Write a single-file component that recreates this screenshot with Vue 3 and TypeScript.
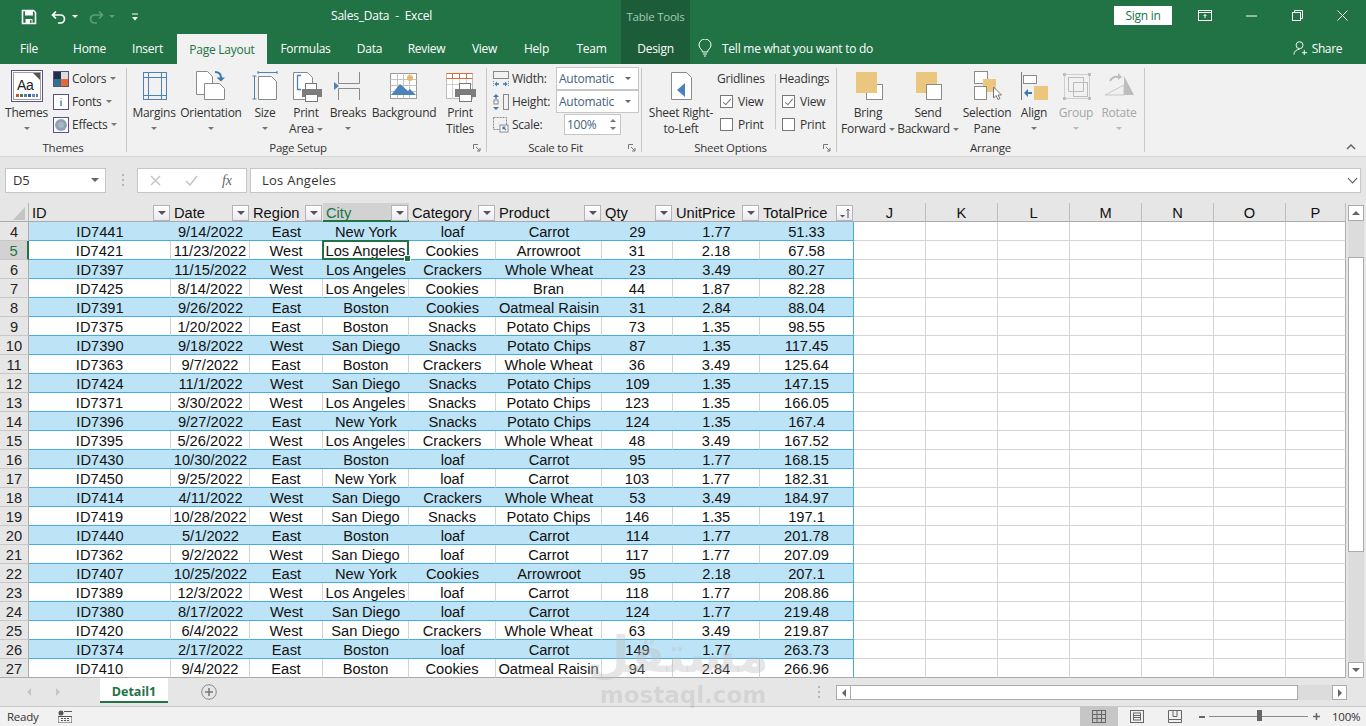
<script setup lang="ts">
const tabs: string[] = ['File', 'Home', 'Insert', 'Page Layout', 'Formulas', 'Data', 'Review', 'View', 'Help', 'Team', 'Design']

const headers: string[] = ['ID', 'Date', 'Region', 'City', 'Category', 'Product', 'Qty', 'UnitPrice', 'TotalPrice']
const blanks: string[] = ['J', 'K', 'L', 'M', 'N', 'O', 'P']

const raw = `ID7441,9/14/2022,East,New York,loaf,Carrot,29,1.77,51.33
ID7421,11/23/2022,West,Los Angeles,Cookies,Arrowroot,31,2.18,67.58
ID7397,11/15/2022,West,Los Angeles,Crackers,Whole Wheat,23,3.49,80.27
ID7425,8/14/2022,West,Los Angeles,Cookies,Bran,44,1.87,82.28
ID7391,9/26/2022,East,Boston,Cookies,Oatmeal Raisin,31,2.84,88.04
ID7375,1/20/2022,East,Boston,Snacks,Potato Chips,73,1.35,98.55
ID7390,9/18/2022,West,San Diego,Snacks,Potato Chips,87,1.35,117.45
ID7363,9/7/2022,East,Boston,Crackers,Whole Wheat,36,3.49,125.64
ID7424,11/1/2022,West,San Diego,Snacks,Potato Chips,109,1.35,147.15
ID7371,3/30/2022,West,Los Angeles,Snacks,Potato Chips,123,1.35,166.05
ID7396,9/27/2022,East,New York,Snacks,Potato Chips,124,1.35,167.4
ID7395,5/26/2022,West,Los Angeles,Crackers,Whole Wheat,48,3.49,167.52
ID7430,10/30/2022,East,Boston,loaf,Carrot,95,1.77,168.15
ID7450,9/25/2022,East,New York,loaf,Carrot,103,1.77,182.31
ID7414,4/11/2022,West,San Diego,Crackers,Whole Wheat,53,3.49,184.97
ID7419,10/28/2022,West,San Diego,Snacks,Potato Chips,146,1.35,197.1
ID7440,5/1/2022,East,Boston,loaf,Carrot,114,1.77,201.78
ID7362,9/2/2022,West,San Diego,loaf,Carrot,117,1.77,207.09
ID7407,10/25/2022,East,New York,Cookies,Arrowroot,95,2.18,207.1
ID7389,12/3/2022,West,Los Angeles,loaf,Carrot,118,1.77,208.86
ID7380,8/17/2022,West,San Diego,loaf,Carrot,124,1.77,219.48
ID7420,6/4/2022,West,San Diego,Crackers,Whole Wheat,63,3.49,219.87
ID7374,2/17/2022,East,Boston,loaf,Carrot,149,1.77,263.73
ID7410,9/4/2022,East,Boston,Cookies,Oatmeal Raisin,94,2.84,266.96`

const rows: { num: number; cells: string[] }[] = raw.split('\n').map((line, i) => ({
  num: i + 4,
  cells: line.split(','),
}))
</script>

<template>
  <div class="app">
    <header class="titlebar">
      <div class="qat">
        <svg class="q-save" width="16" height="16" viewBox="0 0 16 16"><path d="M1.500 1.500h11l2 2v11h-13z" fill="none" stroke="#fff" stroke-width="1.600"/><rect x="4" y="1.500" width="8" height="5" fill="#fff"/><rect x="4.500" y="10" width="7" height="4.500" fill="#fff"/><rect x="9" y="11" width="1.500" height="3" fill="#217346"/></svg>
        <svg class="q-undo" width="16" height="14" viewBox="0 0 16 14"><path d="M5 1.500 1.500 5 5 8.500M2 5h7.500a4 4 0 0 1 0 8H7" fill="none" stroke="#fff" stroke-width="1.700"/></svg>
        <i class="q-caret"></i>
        <svg class="q-redo" width="16" height="14" viewBox="0 0 16 14"><path d="M11 1.500 14.500 5 11 8.500M14 5H6.500a4 4 0 0 0 0 8H9" fill="none" stroke="#5f9d7c" stroke-width="1.700"/></svg>
        <i class="q-caret dim"></i>
        <svg class="q-more" width="8" height="8" viewBox="0 0 8 8"><path d="M1 1h6" stroke="#fff"/><path d="M1 4h6L4 7.500z" fill="#fff"/></svg>
      </div>
      <div class="doc-title">Sales_Data &nbsp;-&nbsp; Excel</div>
      <div class="tools-title">Table Tools</div>
      <div class="win">
        <button class="signin">Sign in</button>
        <svg class="w-ribbon" width="14" height="11" viewBox="0 0 14 11"><rect x=".5" y=".5" width="13" height="10" fill="none" stroke="#fff"/><path d="M1 2.500h12" stroke="#fff"/><path d="M7 8V4.500M5.500 6 7 4.500 8.500 6" fill="none" stroke="#fff"/></svg>
        <svg class="w-min" width="11" height="2" viewBox="0 0 11 2"><path d="M0 1h11" stroke="#fff"/></svg>
        <svg class="w-rest" width="11" height="11" viewBox="0 0 11 11"><path d="M2.500 2.500v-2h8v8h-2" fill="none" stroke="#fff"/><rect x=".5" y="2.500" width="8" height="8" fill="none" stroke="#fff"/></svg>
        <svg class="w-close" width="11" height="11" viewBox="0 0 11 11"><path d="m.5.500 10 10m0-10-10 10" stroke="#fff"/></svg>
      </div>
    </header>

    <nav class="tabsrow">
      <div class="tabs">
        <span v-for="t in tabs" :key="t" class="tab" :class="{ on: t === 'Page Layout', design: t === 'Design' }">{{ t }}</span>
      </div>
      <div class="tellme">
        <svg width="14" height="18" viewBox="0 0 14 18"><path d="M4.500 13c0-2.500-3.500-3.500-3.500-7a6 6 0 0 1 12 0c0 3.500-3.500 4.500-3.500 7zM5 15h4M6 17h2" fill="none" stroke="#fff" stroke-width="1"/></svg>
        <span>Tell me what you want to do</span>
      </div>
      <div class="share">
        <svg width="15" height="16" viewBox="0 0 16 16"><circle cx="7" cy="5" r="3.700" fill="none" stroke="#fff"/><path d="M1 15c0-3.500 2.500-5.500 6-5.500" fill="none" stroke="#fff"/><path d="M12 10v5.500M9.500 13H15" stroke="#fff"/></svg>
        <span>Share</span>
      </div>
    </nav>

    <section class="ribbon">
      <!-- Themes -->
      <div class="group g-themes">
        <div class="g-body">
          <div class="big b-themes">
            <svg class="ic" width="32" height="32" viewBox="0 0 32 32">
              <rect x=".5" y=".5" width="31" height="31" fill="#fff" stroke="#5c4f86"/>
              <rect x="2.500" y="2.500" width="27" height="27" fill="#fff" stroke="#a0a0a0"/>
              <path d="M22 3h7v7z" fill="#555"/>
              <text x="6" y="20" font-size="14" fill="#222" font-family="Liberation Sans">Aa</text>
              <rect x="5" y="24" width="3" height="3" fill="#c55a28"/><rect x="9" y="24" width="3" height="3" fill="#3e7d56"/><rect x="13" y="24" width="3" height="3" fill="#4a7fb5"/><rect x="17" y="24" width="3" height="3" fill="#2f5f8f"/><rect x="21" y="24" width="3" height="3" fill="#5c8fc4"/><rect x="25" y="24" width="2" height="3" fill="#777"/>
            </svg>
            <span>Themes</span>
            <i class="caret"></i>
          </div>
          <div class="stack small-themes">
            <div class="srow">
              <svg width="16" height="16" viewBox="0 0 16 16"><rect x=".5" y=".5" width="15" height="15" fill="#ddd" stroke="#5c4f86"/><rect x="1" y="1" width="7" height="7" fill="#23304a"/><rect x="1" y="8" width="7" height="7" fill="#2f6f8f"/><rect x="8" y="8" width="7" height="7" fill="#e2693a"/></svg>
              <span>Colors</span><i class="caret"></i>
            </div>
            <div class="srow">
              <svg width="16" height="16" viewBox="0 0 16 16"><rect x=".5" y=".5" width="15" height="15" fill="#fff" stroke="#5c4f86"/><path d="M8 4v1" stroke="#d99a2b" stroke-width="1.400"/><path d="M8 6.500V12" stroke="#3b7fbf" stroke-width="1.400"/></svg>
              <span>Fonts</span><i class="caret"></i>
            </div>
            <div class="srow">
              <svg width="16" height="16" viewBox="0 0 16 16"><rect x=".5" y=".5" width="15" height="15" fill="#fff" stroke="#5c4f86"/><circle cx="8" cy="8" r="6" fill="#8ea4b5"/><circle cx="8" cy="8" r="3" fill="#a8b6c2"/></svg>
              <span>Effects</span><i class="caret"></i>
            </div>
          </div>
        </div>
        <div class="g-label">Themes</div>
      </div>
      <i class="sep"></i>

      <!-- Page Setup -->
      <div class="group g-page">
        <div class="g-body cols-page">
          <div class="big">
            <svg class="ic" width="32" height="32" viewBox="0 0 32 32" fill="none" stroke="#4d82b8"><rect x="5.500" y="2.500" width="23" height="27"/><path d="M10.500 2.500v27M23.500 2.500v27M5.500 7.500h23M5.500 25.500h23"/></svg>
            <span>Margins</span><i class="caret"></i>
          </div>
          <div class="big">
            <svg class="ic" width="32" height="32" viewBox="0 0 32 32" fill="none"><path d="M1.500 1.500h11l5 5v18h-16z" fill="#fff" stroke="#8a8a8a"/><path d="M9.500 13.500h15l5 5v11h-20z" fill="#fff" stroke="#8a8a8a"/><path d="M20 2c4 0 6 2 6 6" stroke="#3f78b0" stroke-width="2"/><path d="m21.500 7.500 4.500 4 4-4z" fill="#3f78b0"/></svg>
            <span>Orientation</span><i class="caret"></i>
          </div>
          <div class="big">
            <svg class="ic" width="32" height="32" viewBox="0 0 32 32" fill="none"><path d="M9 2.500h19M9 1v3M28 1v3M5.500 6v23M3.500 6h4M3.500 29h4" stroke="#4d82b8"/><path d="M9.500 6.500h13l5 5v18h-18z" fill="#fff" stroke="#8a8a8a"/></svg>
            <span>Size</span><i class="caret"></i>
          </div>
          <div class="big">
            <svg class="ic" width="32" height="32" viewBox="0 0 32 32" fill="none"><path d="M3.500 2.500h14l5 5v22h-19z" fill="#fff" stroke="#8a8a8a"/><path d="M11 5.500H7.500v14H11" stroke="#4d82b8" stroke-width="1.300"/><rect x="15.500" y="13.500" width="11" height="6" fill="#fff" stroke="#777"/><rect x="12" y="19" width="21" height="8" fill="#7d7d7d"/><rect x="15.500" y="24.500" width="12" height="7" fill="#fff" stroke="#777"/></svg>
            <span>Print</span>
            <span class="withcaret">Area<i class="caret"></i></span>
          </div>
          <div class="big">
            <svg class="ic" width="32" height="32" viewBox="0 0 32 32" fill="none"><path d="M6.500 2v11.500h21V2M6.500 30V18.500h21V30" stroke="#8a8a8a"/><path d="M2 12v8l5-4z" fill="#4d82b8"/></svg>
            <span>Breaks</span><i class="caret"></i>
          </div>
          <div class="big">
            <svg class="ic" width="32" height="32" viewBox="0 0 32 32" fill="none"><rect x="2.500" y="3.500" width="26" height="25" fill="#fff" stroke="#9a9a9a"/><path d="M2.500 9.500h26M2.500 15.500h26M2.500 21.500h26M9.500 3.500v25M15.500 3.500v25M21.500 3.500v25" stroke="#c4c4c4"/><circle cx="22" cy="8" r="3" fill="#e6b96a"/><path d="m3 25 9-11 8 7 2-2 6 6z" fill="#4d82b8"/></svg>
            <span>Background</span>
          </div>
          <div class="big">
            <svg class="ic" width="32" height="32" viewBox="0 0 32 32" fill="none"><rect x="2.500" y="3.500" width="26" height="25" fill="#fff" stroke="#bdbdbd"/><path d="M2.500 8.500h26M2.500 14.500h26M8.500 3.500v25M15.500 3.500v25M22.500 3.500v25" stroke="#d0d0d0"/><path d="M2.500 3.500h26M2.500 8.500h26M8.500 3.500v5M15.500 3.500v5M22.500 3.500v5" stroke="#d96f3c"/><rect x="15.500" y="13.500" width="11" height="6" fill="#fff" stroke="#777"/><rect x="11" y="19" width="22" height="8" fill="#7d7d7d"/><rect x="15.500" y="24.500" width="12" height="7" fill="#fff" stroke="#777"/></svg>
            <span>Print</span><span>Titles</span>
          </div>
        </div>
        <div class="g-label shifted">Page Setup<svg class="launch" width="8" height="8" viewBox="0 0 8 8" fill="none" stroke="#777"><path d="M.5 5V.5H5M3 3l4 4M7 4v3H4"/></svg></div>
      </div>
      <i class="sep"></i>

      <!-- Scale to Fit -->
      <div class="group g-scale">
        <div class="g-body stack">
          <div class="srow scale-row">
            <svg width="16" height="16" viewBox="0 0 16 16" fill="none"><rect x=".5" y=".5" width="15" height="7" stroke="#888"/><path d="M.5 10v5M15.500 10v5" stroke="#888" stroke-dasharray="1 1"/><path d="M3 13h3M10 13h3" stroke="#3f78b0" stroke-width="1.400"/><path d="m1.500 13 2.500-2.500v5zM14.500 13 12 10.500v5z" fill="#3f78b0"/></svg>
            <span class="slabel">Width:</span>
            <div class="combo"><span>Automatic</span><i class="caret dark"></i></div>
          </div>
          <div class="srow scale-row">
            <svg width="16" height="16" viewBox="0 0 16 16" fill="none"><rect x="10.500" y=".5" width="5" height="15" stroke="#888"/><path d="M3 1v14" stroke="#3f78b0" stroke-width="1.400" stroke-dasharray="4 8"/><path d="m0 3 3-3 3 3zM0 13l3 3 3-3z" fill="#3f78b0"/><rect x="1" y="6" width="4" height="4" stroke="#888"/></svg>
            <span class="slabel">Height:</span>
            <div class="combo"><span>Automatic</span><i class="caret dark"></i></div>
          </div>
          <div class="srow scale-row">
            <svg width="16" height="16" viewBox="0 0 16 16" fill="none"><rect x=".5" y=".5" width="13" height="12" stroke="#888" stroke-dasharray="2 1"/><rect x="7" y="8" width="8" height="7" fill="#fff" stroke="#888"/><path d="m10 10 3 3M10 12.500V10h2.500" stroke="#3f78b0" stroke-width="1.200"/></svg>
            <span class="slabel">Scale:</span>
            <div class="spin"><span>100%</span>
              <div class="spin-arrows"><i class="up"></i><i class="down"></i></div>
            </div>
          </div>
        </div>
        <div class="g-label shifted">Scale to Fit<svg class="launch" width="8" height="8" viewBox="0 0 8 8" fill="none" stroke="#777"><path d="M.5 5V.5H5M3 3l4 4M7 4v3H4"/></svg></div>
      </div>
      <i class="sep"></i>

      <!-- Sheet Options -->
      <div class="group g-sheet">
        <div class="g-body cols-sheet">
          <div class="big rtl">
            <svg class="ic" width="32" height="32" viewBox="0 0 32 32" fill="none"><path d="M6.500 2.500h15l5 5v22h-20z" fill="#fff" stroke="#8a8a8a"/><path d="M20 13v14l-8-7z" fill="#4d82b8"/></svg>
            <span>Sheet Right-</span><span>to-Left</span>
          </div>
          <div class="stack opts opts-grid">
            <div class="srow head">Gridlines</div>
            <div class="srow"><i class="check on"></i><span>View</span></div>
            <div class="srow"><i class="check"></i><span>Print</span></div>
          </div>
          <i class="opt-sep"></i>
          <div class="stack opts opts-head">
            <div class="srow head">Headings</div>
            <div class="srow"><i class="check on"></i><span>View</span></div>
            <div class="srow"><i class="check"></i><span>Print</span></div>
          </div>
        </div>
        <div class="g-label shifted">Sheet Options<svg class="launch" width="8" height="8" viewBox="0 0 8 8" fill="none" stroke="#777"><path d="M.5 5V.5H5M3 3l4 4M7 4v3H4"/></svg></div>
      </div>
      <i class="sep"></i>

      <!-- Arrange -->
      <div class="group g-arrange">
        <div class="g-body cols-arrange">
          <div class="big">
            <svg class="ic" width="32" height="32" viewBox="0 0 32 32"><rect x="14.500" y="14.500" width="16" height="15" fill="#fff" stroke="#8a8a8a"/><rect x="4" y="2" width="21" height="21" fill="#ebc67e"/></svg>
            <span>Bring</span><span class="withcaret">Forward<i class="caret"></i></span>
          </div>
          <div class="big">
            <svg class="ic" width="32" height="32" viewBox="0 0 32 32"><rect x="4" y="2" width="21" height="21" fill="#ebc67e"/><rect x="14.500" y="14.500" width="15" height="15" fill="#fff" stroke="#8a8a8a"/></svg>
            <span>Send</span><span class="withcaret">Backward<i class="caret"></i></span>
          </div>
          <div class="big">
            <svg class="ic" width="32" height="32" viewBox="0 0 32 32"><rect x="3.500" y="1.500" width="13" height="12" fill="#fff" stroke="#8a8a8a"/><rect x="12" y="9" width="13" height="13" fill="#ebc67e"/><rect x="3.500" y="16.500" width="12" height="13" fill="#fff" stroke="#8a8a8a"/><path d="M22.500 17v11l2.500-2.500 2 4 2-1-2-3.500h3.500z" fill="#fff" stroke="#777"/></svg>
            <span>Selection</span><span>Pane</span>
          </div>
          <div class="big">
            <svg class="ic" width="32" height="32" viewBox="0 0 32 32"><path d="M3.500 2v28" stroke="#777" fill="none"/><rect x="5.500" y="5.500" width="13" height="8" fill="#fff" stroke="#8a8a8a"/><rect x="16" y="16" width="14" height="14" fill="#ebc67e"/><path d="M8 23h6" stroke="#3f78b0" stroke-width="2"/><path d="m6 23 4-4v8z" fill="#3f78b0"/></svg>
            <span>Align</span><i class="caret"></i>
          </div>
          <div class="big off">
            <svg class="ic" width="32" height="32" viewBox="0 0 32 32" fill="none" stroke="#cfcfcf"><rect x="4.500" y="4.500" width="25" height="24"/><rect x="8.500" y="7.500" width="15" height="14" stroke="#bdbdbd"/><rect x="13.500" y="12.500" width="14" height="14" stroke="#bdbdbd"/><rect x="3" y="3" width="3" height="3" fill="#bdbdbd" stroke="none"/><rect x="28" y="3" width="3" height="3" fill="#bdbdbd" stroke="none"/><rect x="3" y="27" width="3" height="3" fill="#bdbdbd" stroke="none"/><rect x="28" y="27" width="3" height="3" fill="#bdbdbd" stroke="none"/></svg>
            <span>Group</span><i class="caret"></i>
          </div>
          <div class="big off">
            <svg class="ic" width="32" height="32" viewBox="0 0 32 32" fill="none"><path d="M2 25h19V15z" fill="#f0f0f0" stroke="#c8c8c8"/><path d="M21 6 31 25H21z" fill="#bdbdbd"/><path d="M7 11c2-4 5-5 9-4" stroke="#bdbdbd" stroke-width="2"/><path d="m15 3 4 4-4 3z" fill="#bdbdbd"/></svg>
            <span>Rotate</span><i class="caret"></i>
          </div>
        </div>
        <div class="g-label">Arrange</div>
      </div>
      <i class="sep"></i>
      <svg class="collapse" width="10" height="6" viewBox="0 0 10 6"><path d="m1 5 4-4 4 4" fill="none" stroke="#666" stroke-width="1.500"/></svg>
    </section>

    <section class="fbar">
      <div class="namebox"><span>D5</span><i class="caret dark big-c"></i></div>
      <svg class="grip" width="3" height="13" viewBox="0 0 3 13"><path d="M1 0h2v2H1zM1 5h2v2H1zM1 10h2v2H1z" fill="#b4b4b4"/></svg>
      <div class="fbtns">
        <svg width="11" height="11" viewBox="0 0 11 11"><path d="m1 1 9 9m0-9-9 9" stroke="#c4c4c4" stroke-width="1.500"/></svg>
        <svg width="13" height="11" viewBox="0 0 13 11"><path d="m1 6 4 4 7-9" fill="none" stroke="#c4c4c4" stroke-width="1.500"/></svg>
        <span class="fx">fx</span>
      </div>
      <div class="finput"><span>Los Angeles</span><i class="fcaret"></i></div>
    </section>

    <section class="sheetwrap">
      <div class="sheet">
        <div class="row hrow">
          <div class="corner"><i></i></div>
          <div v-for="h in headers" :key="h" class="hcell" :class="{ cur: h === 'City' }">
            <span>{{ h }}</span>
            <b class="filter" :class="{ sorted: h === 'TotalPrice' }">
              <svg v-if="h === 'TotalPrice'" width="12" height="12" viewBox="0 0 12 12"><path d="M1 8h5L3.500 10.500z" fill="#555"/><path d="M9 2v9M7.500 3.500 9 2l1.500 1.500" fill="none" stroke="#555"/></svg>
              <i v-else></i>
            </b>
          </div>
          <div v-for="b in blanks" :key="b" class="hblank">{{ b }}</div>
        </div>
        <div v-for="r in rows" :key="r.num" class="row" :class="r.num % 2 === 0 ? 'band' : 'plain'">
          <div class="rnum" :class="{ cur: r.num === 5 }">{{ r.num }}</div>
          <div v-for="(c, i) in r.cells" :key="i" class="cell" :class="{ last: i === 8 }">
            {{ c }}
            <template v-if="r.num === 5 && i === 3"><span class="selbox"><i class="handle"></i></span></template>
          </div>
          <div v-for="b in blanks" :key="b" class="empty"></div>
        </div>
      </div>
      <aside class="vscroll">
        <button class="vbtn"><i class="tri-up"></i></button>
        <div class="vtrack"><div class="vthumb"></div></div>
        <button class="vbtn"><i class="tri-down"></i></button>
      </aside>
    </section>

    <section class="sheettabs">
      <div class="navs">
        <i class="nav-l"></i><i class="nav-r"></i>
      </div>
      <div class="sheet-tab">Detail1</div>
      <svg class="plus" width="16" height="16" viewBox="0 0 16 16"><circle cx="8" cy="8" r="7.300" fill="none" stroke="#8a8a8a"/><path d="M8 4v8M4 8h8" stroke="#777" stroke-width="1.500"/></svg>
      <svg class="grip2" width="3" height="13" viewBox="0 0 3 13"><path d="M0 0h2v2H0zM0 5h2v2H0zM0 10h2v2H0z" fill="#b4b4b4"/></svg>
      <div class="hscroll">
        <button class="hbtn"><i class="tri-left"></i></button>
        <div class="htrack"><div class="hthumb"></div></div>
        <button class="hbtn"><i class="tri-right"></i></button>
      </div>
    </section>

    <footer class="status">
      <span class="ready">Ready</span>
      <svg class="macro" width="14" height="13" viewBox="0 0 14 13"><circle cx="3" cy="3" r="2.500" fill="#555"/><path d="M6 1.500h8M0 6.500h14V13H0z" fill="none" stroke="#555"/><path d="M3 8.500h2M6 8.500h2M9 8.500h2M3 10.500h2M6 10.500h2M9 10.500h2" stroke="#555"/></svg>
      <div class="views">
        <div class="vw on"><svg width="14" height="13" viewBox="0 0 14 13" fill="none" stroke="#666"><rect x=".5" y=".5" width="13" height="12"/><path d="M.5 4.500h13M.5 8.500h13M5 .5v12M9.500.500v12"/></svg></div>
        <div class="vw"><svg width="14" height="13" viewBox="0 0 14 13" fill="none" stroke="#666"><rect x=".5" y=".5" width="13" height="12"/><rect x="3.500" y="3" width="7" height="7"/><path d="M3.500 5.500h7M3.500 7.500h7"/></svg></div>
        <div class="vw"><svg width="14" height="13" viewBox="0 0 14 13" fill="none" stroke="#666"><path d="M.5 9.500v-9h13v9zM.5 9.500v3h13v-3M5 .5v6h4v-6"/></svg></div>
      </div>
      <div class="zoom">
        <i class="zminus"></i>
        <div class="zline"><i class="zthumb"></i></div>
        <svg width="7" height="7" viewBox="0 0 7 7"><path d="M3.500 0v7M0 3.500h7" stroke="#666" stroke-width="1.500"/></svg>
      </div>
      <span class="pct">100%</span>
    </footer>

    <div class="watermark" aria-hidden="true">
      <div class="wm-ar" dir="rtl">مستقل</div>
      <div class="wm-en">mostaql.com</div>
    </div>
  </div>
</template>

<style>
html, body { margin: 0; padding: 0; overflow: hidden; }
</style>

<style scoped>
.app {
  position: relative;
  width: 1366px;
  height: 726px;
  overflow: hidden;
  background: #e6e6e6;
  display: flex;
  flex-direction: column;
  font-family: "Open Sans", "Noto Sans", sans-serif;
  font-size: 12px;
  letter-spacing: -0.25px;
  color: #333;
}
i, b { font-style: normal; display: block; }
svg { display: block; flex: none; }
button { padding: 0; margin: 0; font: inherit; letter-spacing: inherit; }

/* Title bar */
.titlebar {
  height: 32px;
  flex: none;
  background: #217346;
  color: #fff;
  display: grid;
  grid-template-columns: 331px 290px 69px 1fr auto;
  align-items: stretch;
}
.qat { display: flex; align-items: center; padding-left: 21px; }
.q-undo { margin-left: 14px; }
.q-caret { width: 0; height: 0; border: 3px solid transparent; border-top: 3px solid #fff; border-bottom: 0; margin-left: 5px; }
.q-caret.dim { border-top-color: #5f9d7c; }
.q-redo { margin-left: 10px; }
.q-more { margin-left: 16px; }
.doc-title { line-height: 32px; font-size: 12px; white-space: nowrap; letter-spacing: -0.2px; }
.tools-title { background: #1d5c38; color: #a3cbb4; text-align: center; line-height: 33px; white-space: nowrap; font-size: 11.500px; }
.win { grid-column: 5; display: flex; align-items: center; padding-right: 18px; margin-top: -2px; }
.signin { width: 58px; height: 19px; border: 0; background: #fff; color: #217346; font-size: 12px; line-height: 19px; }
.w-ribbon { margin-left: 26px; }
.w-min { margin-left: 34px; }
.w-rest { margin-left: 35px; }
.w-close { margin-left: 34px; }

/* Tabs */
.tabsrow {
  height: 32px;
  flex: none;
  background: #217346;
  color: #fff;
  display: flex;
  align-items: stretch;
}
.tabs {
  display: grid;
  grid-template-columns: 58px 63px 56px 90px 77px 51px 63px 53px 51px 59px 69px;
}
.tab { text-align: center; line-height: 33px; white-space: nowrap; }
.tab:nth-child(3) { padding-right: 3px; }
.tab.on { background: #f1f1f1; color: #217346; margin-top: 2px; line-height: 31px; }
.tab.design { background: #1d5c38; }
.tellme { display: flex; align-items: center; gap: 10px; padding-left: 8px; }
.share { margin-left: auto; display: flex; align-items: center; gap: 4px; padding-right: 24px; letter-spacing: -0.4px; }

/* Ribbon */
.ribbon {
  height: 92px;
  flex: none;
  background: #f1f1f1;
  border-bottom: 1px solid #d4d4d4;
  display: flex;
  align-items: stretch;
}
.sep { width: 1px; background: #c8c8c8; margin: 4px 0; flex: none; }
.group { display: flex; flex-direction: column; flex: none; }
.g-themes { width: 126px; }
.g-page { width: 359px; }
.g-scale { width: 154px; }
.g-sheet { width: 194px; }
.g-arrange { width: 307px; }
.g-body { height: 73px; margin-top: 3px; display: flex; }
.g-label { height: 16px; line-height: 15px; text-align: center; position: relative; white-space: nowrap; font-size: 11.500px; }
.g-label.shifted { padding-right: 17px; }
.launch { position: absolute; right: 5px; top: 4px; }
.collapse { margin-left: auto; margin-right: 10px; align-self: flex-end; margin-bottom: 6px; }

.big { display: flex; flex-direction: column; align-items: center; padding-top: 3px; line-height: 16px; white-space: nowrap; }
.big > span { height: 16px; flex: none; }
.big .ic { margin-bottom: 3px; }
.big.off { color: #a6a6a6; }
.big > .caret { margin-top: 6px; }
.withcaret { display: flex; align-items: center; gap: 3px; }
.caret { width: 0; height: 0; border: 3px solid transparent; border-top: 3px solid #777; border-bottom: 0; flex: none; }
.caret.dark { border-top-color: #666; }
.off .caret { border-top-color: #bbb; }

.b-themes { width: 53px; }
.stack { display: flex; flex-direction: column; }
.srow { height: 23px; display: flex; align-items: center; white-space: nowrap; }
.small-themes .srow { gap: 3px; }
.small-themes .caret { margin-left: 1px; }
.cols-page { display: grid; grid-template-columns: 54px 60px 48px 34px 50px 62px 50px; }

.g-scale .g-body { padding-left: 6px; }
.scale-row { position: relative; }
.slabel { margin-left: 3px; width: 44px; }
.combo { border: 1px solid #c6c6c6; background: #fff; display: flex; align-items: center; justify-content: space-between; padding: 0 7px 0 2px; box-sizing: content-box; height: 21px; color: #46617d; width: 72px; }
.spin { width: 57px; height: 21px; border: 1px solid #c6c6c6; background: #fff; margin-left: 8px; display: flex; align-items: center; justify-content: space-between; color: #46617d; padding-left: 2px; box-sizing: border-box; }
.spin-arrows { width: 14px; display: flex; flex-direction: column; gap: 5px; align-items: center; }
.spin-arrows .up { width: 0; height: 0; border: 3px solid transparent; border-bottom: 3px solid #777; border-top: 0; }
.spin-arrows .down { width: 0; height: 0; border: 3px solid transparent; border-top: 3px solid #777; border-bottom: 0; }

.cols-sheet { display: flex; }
.rtl { width: 74px; margin-left: 2px; flex: none; }
.opts-grid { width: 57px; flex: none; }
.opts-grid .srow.head { margin-left: -1px; }
.opts-grid .srow:not(.head) { padding-left: 2px; }
.opt-sep { width: 1px; background: #c8c8c8; height: 55px; margin-top: 7px; flex: none; }
.opts-head { padding-left: 3px; }
.opts-head .srow:not(.head) { padding-left: 3px; }
.check { width: 13px; height: 13px; background: #fff; border: 1px solid #777; box-sizing: border-box; margin-right: 5px; flex: none; position: relative; }
.check.on::after { content: ""; position: absolute; left: 3.500px; top: 0.500px; width: 3px; height: 7px; border: solid #777; border-width: 0 1.500px 1.500px 0; transform: rotate(40deg); }

.cols-arrange { display: grid; grid-template-columns: 62px 58px 60px 34px 50px 36px; }

/* Formula bar */
.fbar {
  height: 46px;
  flex: none;
  background: #e6e6e6;
  display: flex;
  align-items: flex-start;
  padding: 11px 5px 0 5px;
  box-sizing: border-box;
  font-size: 13px;
  letter-spacing: -0.1px;
}
.namebox { width: 101px; height: 25px; box-sizing: border-box; border: 1px solid #c6c6c6; background: #fff; display: flex; align-items: center; justify-content: space-between; padding: 0 6px 1px 7px; }
.big-c { border-width: 4px; border-top-width: 4px; border-bottom-width: 0; }
.grip { margin: 6px 0 0 15px; }
.fbtns { width: 110px; height: 25px; box-sizing: border-box; border: 1px solid #c6c6c6; background: #fff; margin-left: 13px; display: flex; align-items: center; padding-left: 12px; }
.fbtns svg:nth-child(2) { margin-left: 24px; }
.fx { margin-left: 24px; font-family: "Liberation Serif", serif; font-style: italic; font-size: 14px; color: #666; }
.finput { margin-left: 3px; width: 1111px; height: 25px; box-sizing: border-box; border: 1px solid #c6c6c6; background: #fff; display: flex; align-items: center; justify-content: space-between; padding: 0 2px 1px 11px; letter-spacing: 0.25px; }
.fcaret { width: 6px; height: 6px; border: solid #555; border-width: 0 1.500px 1.500px 0; transform: rotate(45deg); margin: -3px 2px 0 0; }

/* Sheet */
.sheetwrap { flex: none; height: 475px; display: flex; }
.sheet { width: 1346px; flex: none; font-family: "Liberation Sans", Arial, sans-serif; font-size: 14.670px; letter-spacing: 0; color: #111; }
.row {
  display: grid;
  grid-template-columns: 29px 142px 79px 73px 86px 87px 106px 71px 87px 94px 72px 72px 72px 72px 72px 72px 60px;
  grid-template-rows: 19px;
  height: 19px;
}
.hrow { background: #e6e6e6; }
.corner { border-right: 1px solid #b4b4b4; border-bottom: 1px solid #ababab; box-sizing: border-box; position: relative; }
.corner i { width: 0; height: 0; margin: 4px 0 0 13px; border-style: solid; border-width: 0 0 13px 12px; border-color: transparent transparent #c4c4c4 transparent; }
.hcell, .hblank { box-sizing: border-box; border-bottom: 1px solid #ababab; height: 19px; line-height: 20px; }
.hcell { display: flex; justify-content: space-between; padding-left: 3px; padding-right: 1px; }
.hcell span { white-space: nowrap; }
.hcell.cur { background: #d2d2d2; color: #217346; border-bottom: 2px solid #217346; }
.hblank { text-align: center; border-right: 1px solid #bdbdbd; }
.filter { width: 17px; height: 16px; margin-top: 2px; box-sizing: border-box; border: 1px solid #b4b4b4; background: linear-gradient(#ffffff, #e9e9f2); display: flex; align-items: center; justify-content: center; }
.filter i { width: 0; height: 0; border: 4px solid transparent; border-top: 4px solid #555; border-bottom: 0; }
.rnum { box-sizing: border-box; height: 19px; text-align: center; background: #e6e6e6; border-right: 1px solid #ababab; border-bottom: 1px solid #c8c8c8; line-height: 20px; color: #222; }
.rnum.cur { background: #d2d2d2; color: #217346; border-right: 2px solid #217346; }
.cell { box-sizing: border-box; height: 19px; position: relative; text-align: center; white-space: nowrap; line-height: 20px; border-bottom: 1px solid #46ace2; }
.plain .cell { background: #fff; border-right: 1px solid #d4d4d4; }
.band .cell { background: #bde4f6; }
.cell.last, .plain .cell.last { border-right: 1px solid #46ace2; }
.empty { box-sizing: border-box; height: 19px; background: #fff; border-right: 1px solid #d4d4d4; border-bottom: 1px solid #d4d4d4; }
.empty:last-child { border-right: 1px solid #ababab; }
.row:last-child .cell, .row:last-child .empty, .row:last-child .rnum { border-bottom: 1px solid #ababab; }
.selbox { position: absolute; left: -1px; top: -1px; width: 87px; height: 20px; box-sizing: border-box; border: 2px solid #217346; z-index: 2; }
.handle { position: absolute; right: -4px; bottom: -4px; width: 5px; height: 5px; background: #217346; border: 1px solid #fff; box-sizing: content-box; }

.vscroll { width: 20px; flex: none; display: flex; flex-direction: column; padding: 2px 2px 0; box-sizing: border-box; }
.vbtn { width: 16px; height: 16px; border: 1px solid #ababab; background: #fff; box-sizing: border-box; display: flex; align-items: center; justify-content: center; flex: none; }
.vtrack { flex: 1; background: #dcdcdc; padding-top: 36px; box-sizing: border-box; }
.vthumb { height: 295px; background: #fff; border: 1px solid #ababab; box-sizing: border-box; }
.tri-up { width: 0; height: 0; border: 4px solid transparent; border-bottom: 4px solid #666; border-top: 0; }
.tri-down { width: 0; height: 0; border: 4px solid transparent; border-top: 4px solid #666; border-bottom: 0; }
.tri-left { width: 0; height: 0; border: 4px solid transparent; border-right: 4px solid #666; border-left: 0; }
.tri-right { width: 0; height: 0; border: 4px solid transparent; border-left: 4px solid #666; border-right: 0; }

/* Sheet tabs */
.sheettabs { height: 28px; flex: none; background: #e6e6e6; display: flex; align-items: flex-start; }
.navs { width: 100px; display: flex; padding: 10px 0 0 27px; box-sizing: border-box; gap: 25px; }
.nav-l { width: 0; height: 0; border: 4px solid transparent; border-right: 4px solid #c4c4c4; border-left: 0; }
.nav-r { width: 0; height: 0; border: 4px solid transparent; border-left: 4px solid #c4c4c4; border-right: 0; }
.sheet-tab { width: 68px; height: 25px; box-sizing: border-box; background: #fff; border-bottom: 2px solid #217346; color: #217346; font-weight: 700; text-align: center; line-height: 27px; font-size: 12.500px; letter-spacing: 0; font-family: "Open Sans", sans-serif; }
.plus { margin: 6px 0 0 33px; }
.grip2 { margin: 8px 0 0 601px; }
.hscroll { display: flex; margin: 7px 0 0 15px; }
.hbtn { width: 15px; height: 15px; border: 1px solid #ababab; background: #fff; box-sizing: border-box; display: flex; align-items: center; justify-content: center; }
.htrack { width: 481px; background: #dcdcdc; }
.hthumb { width: 447px; height: 15px; background: #fff; border: 1px solid #ababab; box-sizing: border-box; border-left: 0; }

/* Status */
.status { height: 20px; flex: none; box-sizing: border-box; background: #f1f1f1; border-top: 1px solid #c8c8c8; display: flex; align-items: center; white-space: nowrap; }
.ready { margin-left: 7px; width: 51px; flex: none; font-size: 11.500px; }
.views { margin-left: 1008px; display: flex; align-self: stretch; flex: none; }
.vw { width: 38px; display: flex; align-items: center; justify-content: center; }
.vw.on { background: #c6c6c6; }
.zoom { margin-left: 5px; display: flex; align-items: center; flex: none; }
.zminus { width: 6px; height: 2px; background: #666; }
.zline { width: 99px; height: 1px; background: #8a8a8a; margin: 0 5px 0 4px; position: relative; }
.zthumb { position: absolute; left: 48px; top: -6px; width: 5px; height: 11px; background: #666; }
.pct { margin-left: 12px; font-size: 11.500px; flex: none; }

/* Watermark */
.watermark { position: absolute; left: 597px; top: 630px; width: 172px; text-align: center; pointer-events: none; z-index: 5; line-height: 1; }
.wm-ar { font-family: "DejaVu Sans", sans-serif; font-weight: 700; font-size: 50px; height: 54px; letter-spacing: 0; color: rgba(190, 190, 190, 0.38); }
.wm-en { font-family: "DejaVu Sans", sans-serif; font-weight: 700; font-size: 23px; letter-spacing: 0; color: rgba(120, 120, 120, 0.16); }
</style>
